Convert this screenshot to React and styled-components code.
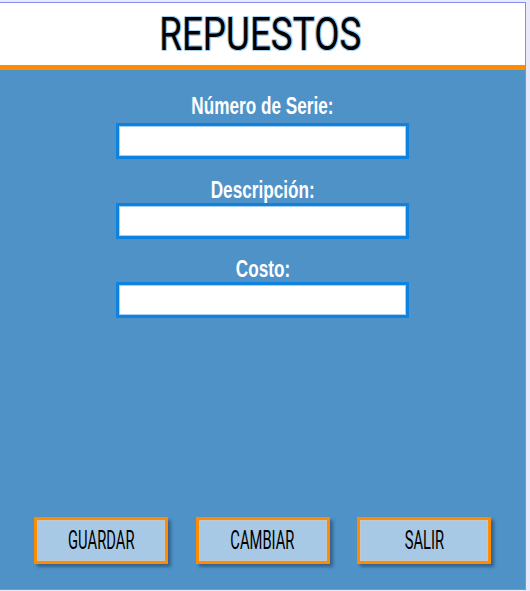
import React from "react";
import styled, { createGlobalStyle } from "styled-components";

const GlobalStyle = createGlobalStyle`
  html, body {
    margin: 0;
    padding: 0;
    background: #e9e9fb;
  }
  body {
    font-family: "Liberation Sans", Arial, sans-serif;
  }
`;

const Window = styled.div`
  box-sizing: border-box;
  width: 526px;
  height: 588px;
  margin-top: 2px;
  border-top: 1px solid #7d8ff2;
  border-right: 1px solid #7d8ff2;
  border-bottom: 1px solid #7d8ff2;
  display: flex;
  flex-direction: column;
`;

const Header = styled.header`
  height: 62px;
  background: #ffffff;
  border-bottom: 5px solid #ff8c00;
  display: flex;
  align-items: center;
  justify-content: center;
`;

const Title = styled.h1`
  margin: 0 0 0 -4px;
  font-family: Roboto, "Liberation Sans", sans-serif;
  font-weight: 400;
  font-size: 46px;
  line-height: 1;
  color: #000;
  transform: scaleX(0.8);
  text-shadow:
    1px 0 0 #a9cff0, -1px 0 0 #a9cff0, 0 1px 0 #a9cff0, 0 -1px 0 #a9cff0,
    1px 1px 0 #a9cff0, -1px -1px 0 #a9cff0, 1px -1px 0 #a9cff0, -1px 1px 0 #a9cff0;
`;

const Body = styled.main`
  flex: 1;
  background: #4f92c8;
  display: flex;
  flex-direction: column;
  align-items: center;
  padding-top: 22px;
  padding-bottom: 25px;
`;

const Fields = styled.div`
  display: flex;
  flex-direction: column;
  gap: 16.5px;
`;

const Field = styled.div`
  display: flex;
  flex-direction: column;
  align-items: center;
`;

const Label = styled.label`
  display: block;
  height: 27px;
  line-height: 27px;
  margin-bottom: ${(p) => p.$gap || 0}px;
  font-family: "Liberation Sans", Arial, sans-serif;
  font-weight: bold;
  font-size: 24px;
  color: #ffffff;
  white-space: nowrap;
  transform: scaleX(0.715);
`;

const Input = styled.input`
  box-sizing: border-box;
  width: 293px;
  height: 36px;
  margin: 0;
  padding: 0 4px;
  border: 3px solid #0f82e0;
  box-shadow: inset 0 0 0 1px #a8d0f4;
  background: #ffffff;
  outline: none;
  font-family: "Liberation Sans", Arial, sans-serif;
  font-size: 16px;
`;

const ButtonRow = styled.div`
  margin-top: auto;
  align-self: stretch;
  display: flex;
  justify-content: space-between;
  padding: 0 34px;
`;

const Button = styled.button`
  box-sizing: border-box;
  width: 134px;
  height: 47px;
  margin: 0;
  padding: 0;
  background: #a8c9e5;
  border: 3px solid #ff8c00;
  box-shadow: inset 0 0 0 1px #bfc7cf, 3px 3px 3px rgba(20, 40, 70, 0.45);
  display: flex;
  align-items: center;
  justify-content: center;
  cursor: pointer;
`;

const ButtonText = styled.span`
  display: inline-block;
  font-family: Roboto, "Liberation Sans", sans-serif;
  font-weight: 400;
  font-size: 25px;
  line-height: 1;
  color: #000;
  transform: scaleX(0.59);
  white-space: nowrap;
`;

const fields = [
  { label: "Número de Serie:", gap: 4 },
  { label: "Descripción:", gap: 0 },
  { label: "Costo:", gap: 0 },
];

const buttons = ["GUARDAR", "CAMBIAR", "SALIR"];

export default function App() {
  return (
    <>
      <GlobalStyle />
      <Window>
        <Header>
          <Title>REPUESTOS</Title>
        </Header>
        <Body>
          <Fields>
            {fields.map((f) => (
              <Field key={f.label}>
                <Label $gap={f.gap}>{f.label}</Label>
                <Input type="text" />
              </Field>
            ))}
          </Fields>
          <ButtonRow>
            {buttons.map((b) => (
              <Button key={b} type="button">
                <ButtonText>{b}</ButtonText>
              </Button>
            ))}
          </ButtonRow>
        </Body>
      </Window>
    </>
  );
}
